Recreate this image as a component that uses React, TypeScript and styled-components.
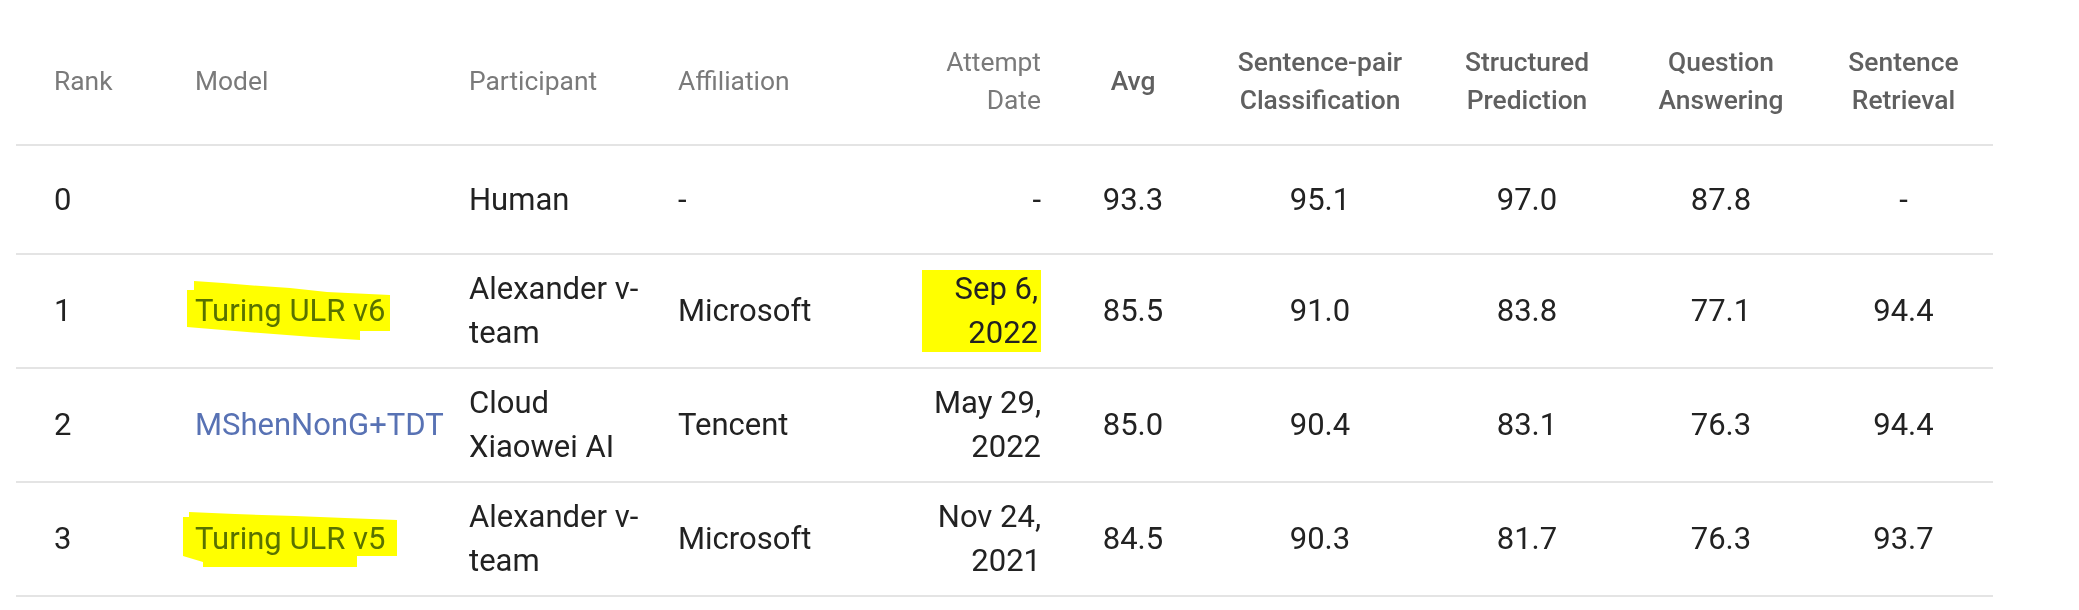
import React from "react";
import styled, { createGlobalStyle } from "styled-components";

const GlobalStyle = createGlobalStyle`
  *, *::before, *::after { box-sizing: border-box; }
  html, body { margin: 0; padding: 0; background: #ffffff; }
  body {
    font-family: Roboto, "Noto Sans", "Liberation Sans", Arial, sans-serif;
    -webkit-font-smoothing: antialiased;
  }
`;

const COLS = "168px 274px 209px 244px 141px 162px 212px 202px 186px 179px";

type Align = "left" | "center" | "right";
const justifyOf: Record<Align, string> = {
  left: "flex-start",
  center: "center",
  right: "flex-end",
};

const Board = styled.div`
  width: 1977px;
  margin-left: 16px;
  padding-top: 17px;
`;

const Row = styled.div<{ $head?: boolean }>`
  display: grid;
  grid-template-columns: ${COLS};
  min-height: ${(p) => (p.$head ? 129 : 109)}px;
  border-bottom: 2px solid #e4e4e4;
`;

const Cell = styled.div<{ $align: Align; $first?: boolean }>`
  display: flex;
  align-items: center;
  justify-content: ${(p) => justifyOf[p.$align]};
  text-align: ${(p) => p.$align};
  padding: 12px 11px 12px ${(p) => (p.$first ? 38 : 11)}px;
  font-size: 31px;
  line-height: 44px;
  color: #222222;
`;

const HeadCell = styled(Cell)<{ $strong?: boolean }>`
  font-size: 26.4px;
  line-height: 38px;
  font-weight: ${(p) => (p.$strong ? 500 : 400)};
  color: ${(p) => (p.$strong ? "#606060" : "#7a7a7a")};
`;

const ModelLink = styled.a`
  color: #5872b4;
  text-decoration: none;
  white-space: nowrap;
`;

const Marked = styled.span`
  position: relative;
  display: inline-block;
`;

const MarkerSvg = styled.svg`
  position: absolute;
  left: 0;
  top: 0;
  width: 1px;
  height: 1px;
  overflow: visible;
  mix-blend-mode: multiply;
  pointer-events: none;
`;

const DateMark = styled.span`
  padding: 0 3px;
  background: linear-gradient(
    to bottom,
    transparent 0,
    transparent 3px,
    #ffff00 3px,
    #ffff00 calc(100% - 3px),
    transparent calc(100% - 3px)
  );
  -webkit-box-decoration-break: clone;
  box-decoration-break: clone;
`;

const shapes: Record<string, string> = {
  v6: "-1,-8 28,-6 52,-4 95,-1 132,3 195,6 195,42 165,42 165,51 118,48 52,43 -8,38 -8,1 -1,1",
  v5: "-6,-5 40,-3 100,-1 150,1 202,3 202,39 162,39 162,50 100,50 8,50 8,45 -12,39 -12,0 -6,0",
};

type Entry = {
  rank: string;
  model?: string;
  mark?: string;
  participant: string;
  affiliation: string;
  date: string;
  dateMarked?: boolean;
  scores: string[];
};

const rows: Entry[] = [
  {
    rank: "0",
    participant: "Human",
    affiliation: "-",
    date: "-",
    scores: ["93.3", "95.1", "97.0", "87.8", "-"],
  },
  {
    rank: "1",
    model: "Turing ULR v6",
    mark: "v6",
    participant: "Alexander v-team",
    affiliation: "Microsoft",
    date: "Sep 6, 2022",
    dateMarked: true,
    scores: ["85.5", "91.0", "83.8", "77.1", "94.4"],
  },
  {
    rank: "2",
    model: "MShenNonG+TDT",
    participant: "Cloud Xiaowei AI",
    affiliation: "Tencent",
    date: "May 29, 2022",
    scores: ["85.0", "90.4", "83.1", "76.3", "94.4"],
  },
  {
    rank: "3",
    model: "Turing ULR v5",
    mark: "v5",
    participant: "Alexander v-team",
    affiliation: "Microsoft",
    date: "Nov 24, 2021",
    scores: ["84.5", "90.3", "81.7", "76.3", "93.7"],
  },
];

const scoreHeads = [
  "Avg",
  "Sentence-pair Classification",
  "Structured Prediction",
  "Question Answering",
  "Sentence Retrieval",
];

function ModelName({ name, mark }: { name?: string; mark?: string }) {
  if (!name) return null;
  if (!mark) return <ModelLink href="#">{name}</ModelLink>;
  return (
    <Marked>
      <ModelLink href="#">{name}</ModelLink>
      <MarkerSvg aria-hidden="true">
        <polygon points={shapes[mark]} fill="#ffff00" />
      </MarkerSvg>
    </Marked>
  );
}

export default function App() {
  return (
    <>
      <GlobalStyle />
      <Board>
        <Row $head>
          <HeadCell $align="left" $first>
            Rank
          </HeadCell>
          <HeadCell $align="left">Model</HeadCell>
          <HeadCell $align="left">Participant</HeadCell>
          <HeadCell $align="left">Affiliation</HeadCell>
          <HeadCell $align="right">Attempt Date</HeadCell>
          {scoreHeads.map((h) => (
            <HeadCell key={h} $align="center" $strong>
              {h}
            </HeadCell>
          ))}
        </Row>
        {rows.map((r) => (
          <Row key={r.rank}>
            <Cell $align="left" $first>
              {r.rank}
            </Cell>
            <Cell $align="left">
              <ModelName name={r.model} mark={r.mark} />
            </Cell>
            <Cell $align="left">{r.participant}</Cell>
            <Cell $align="left">{r.affiliation}</Cell>
            <Cell $align="right">
              {r.dateMarked ? <DateMark>{r.date}</DateMark> : r.date}
            </Cell>
            {r.scores.map((s, i) => (
              <Cell key={i} $align="center">
                {s}
              </Cell>
            ))}
          </Row>
        ))}
      </Board>
    </>
  );
}
